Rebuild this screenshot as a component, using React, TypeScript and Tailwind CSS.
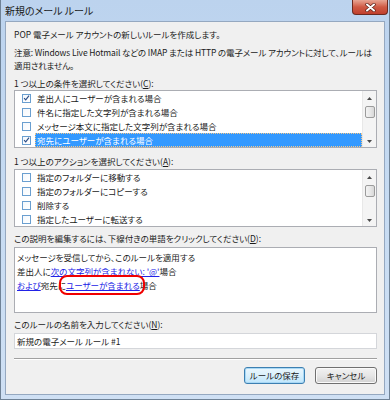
import React from 'react';

const font = "font-['Noto_Sans_CJK_JP','Noto_Sans',sans-serif] [font-feature-settings:'palt']";

function CheckBox({ checked }: { checked: boolean }) {
  return (
    <span className="w-[9px] h-[9px] border border-[#6a9fd0] bg-gradient-to-br from-[#f4f8fc] to-white flex items-center justify-center shrink-0">
      {checked && (
        <svg width="8" height="8" viewBox="0 0 8 8">
          <path d="M1.2 4.2 L3.1 6.2 L6.9 1.2" fill="none" stroke="#2d4e86" strokeWidth="1.3" />
        </svg>
      )}
    </span>
  );
}

function ScrollBar() {
  return (
    <div className="w-[14px] bg-[#f4f4f4] border-l border-[#e8e8e8] flex flex-col items-center">
      <svg width="7" height="14" viewBox="0 0 7 14" className="mt-[1px]">
        <path d="M1 8 L3.5 5 L6 8 Z" fill="#4a4a4a" />
      </svg>
      <div className="w-[10px] h-[12px] rounded-[2px] border border-[#9b9b9b] bg-gradient-to-r from-[#f3f3f3] via-[#e8e8e8] to-[#d8d8d8]" />
      <div className="flex-1" />
      <svg width="7" height="12" viewBox="0 0 7 12">
        <path d="M1 5 L3.5 8 L6 5 Z" fill="#4a4a4a" />
      </svg>
    </div>
  );
}

function CheckList({ items }: { items: { label: string; checked: boolean; selected?: boolean }[] }) {
  return (
    <div className="h-[58px] border border-[#abadb3] bg-white flex">
      <div className="flex-1 flex flex-col">
        {items.map((item) => (
          <div key={item.label} className="h-[14px] flex items-center">
            <span className="w-[16px] flex justify-end">
              <CheckBox checked={item.checked} />
            </span>
            <span className="w-[1px]" />
            <span
              className={
                item.selected
                  ? 'flex-1 h-[14px] ml-[3px] pl-[1px] bg-[#3399ff] text-white border border-dotted border-[#f3c78a] flex items-center'
                  : 'flex-1 h-[14px] ml-[3px] pl-[2px] text-[#1a1a1a] flex items-center'
              }
            >
              {item.label}
            </span>
          </div>
        ))}
      </div>
      <ScrollBar />
    </div>
  );
}

function Link({ children }: { children: React.ReactNode }) {
  return <span className="text-[#2222e6] underline underline-offset-[1px]">{children}</span>;
}

export default function App() {
  const conditions = [
    { label: '差出人にユーザーが含まれる場合', checked: true },
    { label: '件名に指定した文字列が含まれる場合', checked: false },
    { label: 'メッセージ本文に指定した文字列が含まれる場合', checked: false },
    { label: '宛先にユーザーが含まれる場合', checked: true, selected: true },
  ];
  const actions = [
    { label: '指定のフォルダーに移動する', checked: false },
    { label: '指定のフォルダーにコピーする', checked: false },
    { label: '削除する', checked: false },
    { label: '指定したユーザーに転送する', checked: false },
  ];

  return (
    <div className={`w-[390px] h-[400px] ${font} bg-gradient-to-b from-[#bcd3ee] via-[#c6dbf2] to-[#cfe0f4] border-x border-b border-[#6f8296] flex flex-col`}>
      {/* title bar */}
      <div className="h-[21px] flex items-start justify-between">
        <span className="pl-[4px] pt-[4px] text-[10px] leading-[13px] text-[#1a1a1a]">新規のメール ルール</span>
        <button className="mr-[1px] w-[36px] h-[15px] rounded-b-[4px] border border-t-0 border-[#6c2a20] bg-gradient-to-b from-[#e7a594] via-[#cf5a45] to-[#c0402d] flex items-center justify-center">
          <svg width="11" height="9" viewBox="0 0 11 9">
            <path d="M2 1.5 L9 7.5 M9 1.5 L2 7.5" stroke="#5a2018" strokeWidth="3.4" strokeLinecap="round" />
            <path d="M2 1.5 L9 7.5 M9 1.5 L2 7.5" stroke="#ffffff" strokeWidth="2" strokeLinecap="round" />
          </svg>
        </button>
      </div>

      {/* client area */}
      <div className="flex-1 mx-[4px] mb-[4px] border border-[#95a8c0] bg-[#f0f0f0] pl-[8px] pr-[7px] pt-[6px] text-[8.5px] text-[#1a1a1a] flex flex-col">
        <p className="leading-[13px]">POP 電子メール アカウントの新しいルールを作成します。</p>
        <p className="mt-[5px] leading-[13px] tracking-[-0.12px]">
          <span className="whitespace-nowrap">
            注意: Windows Live Hotmail などの IMAP または HTTP の電子メール アカウントに対して、ルールは
          </span>
          <br />
          適用されません。
        </p>

        <p className="mt-[5px] leading-[13px]">
          1 つ以上の条件を選択してください(<span className="underline">C</span>):
        </p>
        <CheckList items={conditions} />

        <p className="mt-[7px] leading-[13px]">
          1 つ以上のアクションを選択してください(<span className="underline">A</span>):
        </p>
        <div className="mt-[1px]">
          <CheckList items={actions} />
        </div>

        <p className="mt-[5px] leading-[13px]">
          この説明を編集するには、下線付きの単語をクリックしてください(<span className="underline">D</span>):
        </p>
        <div className="mt-[2px] h-[66px] border border-[#abadb3] bg-white pl-[2px] pt-[2px] leading-[14px]">
          <p>メッセージを受信してから、このルールを適用する</p>
          <p>
            差出人に<Link>次の文字列が含まれない: '@'</Link>場合
          </p>
          <p>
            <Link>および</Link>宛先に
            <span className="relative inline-block">
              <Link>ユーザーが含まれる</Link>
              <span className="absolute -left-[7px] -right-[5px] -top-[3px] -bottom-[3px] border-[2.5px] border-[#f00000] rounded-[8px]" />
            </span>
            場合
          </p>
        </div>

        <p className="mt-[5px] leading-[13px]">
          このルールの名前を入力してください(<span className="underline">N</span>):
        </p>
        <div className="mt-[2px] h-[16px] border border-[#d4d6da] bg-white pl-[2px] flex items-center">
          新規の電子メール ルール #1
        </div>

        <div className="mt-[9px] border-t border-[#a0a0a0] border-b border-b-white" />

        <div className="mt-[7px] flex justify-end gap-[10px]">
          <button className="w-[61px] h-[17px] rounded-[3px] border border-[#3c7fb1] bg-gradient-to-b from-[#eaf6fd] via-[#d9f0fc] to-[#bee6fd] text-[8.5px] text-[#1a1a1a] flex items-center justify-center shadow-[inset_0_0_0_1px_#a8d8f5]">
            ルールの保存
          </button>
          <button className="w-[62px] h-[17px] rounded-[3px] border border-[#707070] bg-gradient-to-b from-[#f2f2f2] via-[#e6e6e6] to-[#d2d2d2] text-[8.5px] text-[#1a1a1a] flex items-center justify-center shadow-[inset_0_0_0_1px_#fafafa]">
            キャンセル
          </button>
        </div>
      </div>
    </div>
  );
}
